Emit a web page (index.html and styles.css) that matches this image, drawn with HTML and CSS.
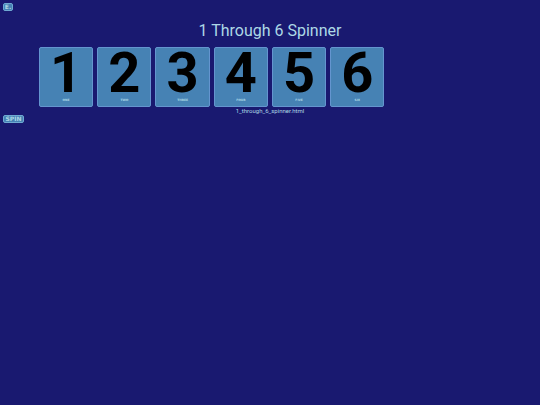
FILE: index.html
```html
<!DOCTYPE html>
<html lang="en">
<head>
    <meta charset="utf-8">
    <meta name="viewport" content="width=device-width, initial-scale=1.0">
    <title>1 Through 6 Spinner</title>
    <link rel="stylesheet" href="styles.css">
</head>
<body>
    <header>
        <button class="edit-button" id="edit-button">E.</button>
        <h1>1 Through 6 Spinner</h1>
    </header>
    <main>
        <div class="tiles">
            <div class="tile"><span class="number">1</span><span class="word">ONE</span></div>
            <div class="tile"><span class="number">2</span><span class="word">TWO</span></div>
            <div class="tile"><span class="number">3</span><span class="word">THREE</span></div>
            <div class="tile"><span class="number">4</span><span class="word">FOUR</span></div>
            <div class="tile"><span class="number">5</span><span class="word">FIVE</span></div>
            <div class="tile"><span class="number">6</span><span class="word">SIX</span></div>
        </div>
        <p class="file-name">1_through_6_spinner.html</p>
        <button class="spin-button" id="spin-button">SPIN</button>
    </main>
</body>
</html>
```

FILE: styles.css
```css
* {
    box-sizing: border-box;
    margin: 0;
    padding: 0;
}

body {
    padding: 3px;
    font-family: Roboto, Arial, sans-serif;
    color: lightblue;
    background-color: midnightblue;
}

button {
    display: block;
    height: 8px;
    border: 1px solid #6fa9d2;
    border-radius: 2px;
    font-family: "DejaVu Sans", Verdana, sans-serif;
    font-size: 6px;
    font-weight: bold;
    line-height: 6px;
    color: lightblue;
    background-color: steelblue;
    cursor: pointer;
}

.edit-button {
    width: 10px;
}

.spin-button {
    width: 21px;
}

h1 {
    margin-top: 10px;
    font-size: 16px;
    font-weight: normal;
    line-height: 20px;
    text-align: center;
}

.tiles {
    display: grid;
    grid-template-columns: repeat(6, 1fr);
    gap: 4px;
    width: 64.7%;
    margin: 6px 0 0 36px;
}

.tile {
    display: flex;
    flex-direction: column;
    align-items: center;
    height: 60px;
    border: 1px solid #6495cf;
    border-radius: 2px;
    background-color: steelblue;
}

.number {
    font-size: 56px;
    font-weight: bold;
    line-height: 50px;
    color: black;
}

.word {
    font-family: "DejaVu Sans", Verdana, sans-serif;
    font-size: 3px;
    font-weight: bold;
    line-height: 4px;
}

.file-name {
    font-size: 6px;
    line-height: 8px;
    text-align: center;
}
```
